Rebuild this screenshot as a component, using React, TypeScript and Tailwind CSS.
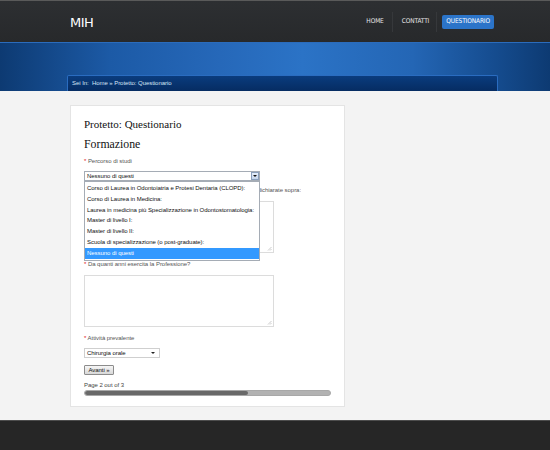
export default function App() {
  const options = [
    "Corso di Laurea in Odontoiatria e Protesi Dentaria (CLOPD):",
    "Corso di Laurea in Medicina:",
    "Laurea in medicina più Specializzazione in Odontostomatologia:",
    "Master di livello I:",
    "Master di livello II:",
    "Scuola di specializzazione (o post-graduate):",
    "Nessuno di questi",
  ];
  const small = "font-['Liberation_Sans',Arial,sans-serif] text-[6px] tracking-[-0.05px]";
  return (
    <div className="w-[550px] h-[450px] overflow-hidden bg-[#f3f3f3] font-['Liberation_Sans',Arial,sans-serif]">
      {/* header */}
      <div className="h-[42px] bg-gradient-to-b from-[#2d2f32] to-[#27292b] border-t border-[#5a5a5a] flex items-center">
        <div className="ml-[70px] mt-[2px] text-white text-[13px] font-['DejaVu_Sans',sans-serif] tracking-[-0.5px]">MIH</div>
        <nav className="ml-auto mr-[56px] flex items-center h-full text-[#e6e6e6] text-[6.5px] font-['DejaVu_Sans_Condensed','DejaVu_Sans',sans-serif] tracking-[-0.1px]">
          <span>HOME</span>
          <span className="mx-[8px] w-px h-[20px] bg-[#1f2022] border-r border-[#36383b]" />
          <span className="ml-[1px]">CONTATTI</span>
          <span className="ml-[7px] mr-[5px] w-px h-[20px] bg-[#1f2022] border-r border-[#36383b]" />
          <span className="h-[14px] px-[4px] flex items-center rounded-[2px] bg-[#2b74c9] text-white">QUESTIONARIO</span>
        </nav>
      </div>
      {/* blue band */}
      <div className="h-[49px] pt-[32px] bg-[linear-gradient(90deg,#0d3a72_0%,#1c5aa6_20%,#2668b9_40%,#2b73c6_55%,#2466b5_75%,#154c8f_90%,#0d3a72_100%)] border-t border-[#2b6cbc]">
        <div className="ml-[67px] w-[431px] h-[16px] rounded-t-[2px] border border-b-0 border-[#2a6cc0] bg-gradient-to-b from-[#0a3c7e] to-[#062c62] flex items-center pl-[4px]">
          <span className={`${small} text-[#d6e4f5]`}>Sei In:&nbsp; Home » Protetto: Questionario</span>
        </div>
      </div>
      {/* main */}
      <div className="h-[329px] pt-[14px]">
        <div className="relative ml-[70px] w-[275px] h-[302px] bg-white border border-[#e4e4e4] pl-[13px] pt-[11px]">
          <div className="font-['Liberation_Serif',serif] text-[11px] leading-[14px] text-[#111]">Protetto: Questionario</div>
          <div className="mt-[5px] font-['Liberation_Serif',serif] text-[11.8px] leading-[16px] text-[#111]">Formazione</div>
          <div className={`${small} mt-[5px] leading-[8px] text-[#555]`}><span className="text-[#e01010]">*</span> Percorso di studi</div>
          {/* open select */}
          <div className="relative mt-[6px] w-[176px] h-[10px] border border-[#a5acb5] bg-white flex items-center">
            <span className={`${small} pl-[2px] text-[#111] flex-1`}>Nessuno di questi</span>
            <span className="w-[8px] h-[8px] border border-[#8aa0bd] bg-gradient-to-b from-[#e8f0fb] to-[#c6d6ec] flex items-center justify-center">
              <span className="w-0 h-0 border-l-[2px] border-r-[2px] border-t-[2px] border-l-transparent border-r-transparent border-t-[#111]" />
            </span>
            <div className="absolute left-[-1px] top-[9px] w-[176px] border border-[#a5acb5] bg-white z-10 py-[1px]">
              {options.map((o, i) => (
                <div key={o} className={`${small} h-[10.8px] leading-[10.8px] pl-[2px] ${i === 6 ? "bg-[#3399ff] text-white" : "text-[#111]"}`}>{o}</div>
              ))}
            </div>
          </div>
          <div className={`${small} mt-[5px] leading-[8px] text-[#555] whitespace-nowrap w-[217px] overflow-hidden text-right`}><span className="text-[#e01010]">*</span> Altri titoli di studio o specializzazioni conseguiti oltre a quelli dichiarate sopra:</div>
          <div className="relative mt-[7px] w-[190px] h-[52px] border border-[#dcdcdc] bg-white">
            <Grip />
          </div>
          <div className={`${small} mt-[7px] leading-[8px] text-[#555]`}><span className="text-[#e01010]">*</span> Da quanti anni esercita la Professione?</div>
          <div className="relative mt-[7px] w-[190px] h-[52px] border border-[#dcdcdc] bg-white">
            <Grip />
          </div>
          <div className={`${small} mt-[7px] leading-[8px] text-[#555]`}><span className="text-[#e01010]">*</span> Attività prevalente</div>
          <div className="mt-[6px] w-[76px] h-[10px] border border-[#cfcfcf] bg-white flex items-center">
            <span className={`${small} pl-[2px] text-[#111] flex-1`}>Chirurgia orale</span>
            <span className="mr-[4px] w-0 h-0 border-l-[2px] border-r-[2px] border-t-[2.5px] border-l-transparent border-r-transparent border-t-[#222]" />
          </div>
          <div className="mt-[7px] w-[30px] h-[10px] border border-[#8c8c8c] rounded-[1px] bg-gradient-to-b from-[#f6f6f6] to-[#d8d8d8] flex items-center justify-center">
            <span className={`${small} text-[#111]`}>Avanti »</span>
          </div>
          <div className={`${small} mt-[6px] leading-[8px] text-[#444]`}>Page 2 out of 3</div>
          <div className="mt-[1px] w-[247px] h-[6px] rounded-full bg-[#b2b2b2] overflow-hidden border border-[#a8a8a8]">
            <div className="h-full rounded-full bg-[#696969]" style={{ width: "66.5%" }} />
          </div>
        </div>
      </div>
      {/* footer */}
      <div className="h-[30px] bg-[#262626] border-t border-[#4d4d4d]" />
    </div>
  );
}

function Grip() {
  return (
    <svg className="absolute right-[1px] bottom-[1px]" width="5" height="5" viewBox="0 0 5 5">
      <path d="M4.5 1 L1 4.5 M4.5 3 L3 4.5" stroke="#b5b5b5" strokeWidth="0.7" />
    </svg>
  );
}
